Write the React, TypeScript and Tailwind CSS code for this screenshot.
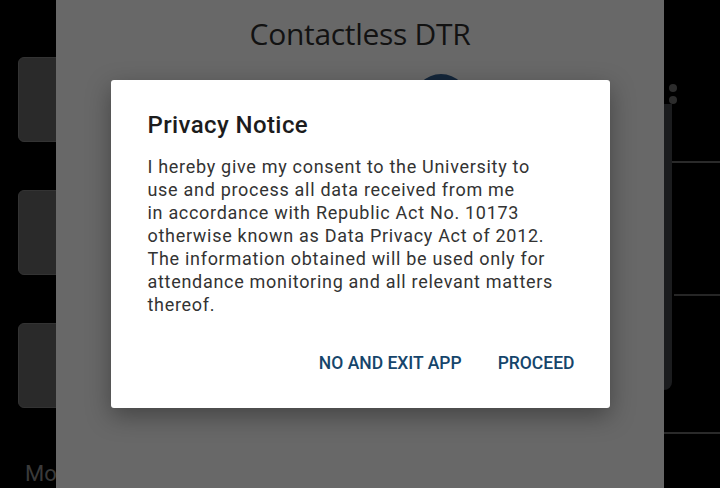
import React from 'react';

const bodyLines = [
  'I hereby give my consent to the University to',
  'use and process all data received from me',
  'in accordance with Republic Act No. 10173',
  'otherwise known as Data Privacy Act of 2012.',
  'The information obtained will be used only for',
  'attendance monitoring and all relevant matters',
  'thereof.',
];

function LeftPeek() {
  return (
    <div className="w-[56px] h-full bg-black overflow-hidden flex flex-col pt-[57px] pl-[18px]">
      {/* dimmed cards of the previous screen */}
      <div className="flex flex-col gap-[48px]">
        <div className="w-[50px] h-[85px] rounded-md bg-[#2a2a2a] border border-[#333]" />
        <div className="w-[50px] h-[85px] rounded-md bg-[#2a2a2a] border border-[#333]" />
        <div className="w-[50px] h-[85px] rounded-md bg-[#2a2a2a] border border-[#333]" />
      </div>
      <span className="mt-auto pl-[7px] text-[22px] leading-[28px] text-[#3a3a3a] font-['Roboto',sans-serif] whitespace-nowrap">
        Mo
      </span>
    </div>
  );
}

function RightPeek() {
  return (
    <div className="w-[56px] h-full bg-black overflow-hidden flex flex-col pt-[84px]">
      <div className="flex flex-col gap-[4px] pl-[5px]">
        <div className="w-[8px] h-[8px] rounded-full bg-[#2c2c2c]" />
        <div className="w-[8px] h-[8px] rounded-full bg-[#2c2c2c]" />
      </div>
      <div className="flex">
        <div className="w-[8px] h-[286px] rounded-br-lg bg-[#1b1c1e]" />
        <div className="flex-1 flex flex-col pt-[57px] gap-[131px]">
          <div className="h-[2px] bg-[#2a2a2a]" />
          <div className="h-[2px] bg-[#262626] ml-[2px]" />
        </div>
      </div>
      <div className="mt-[42px] h-[2px] bg-[#2a2a2a]" />
    </div>
  );
}

export default function App() {
  return (
    <div className="w-[720px] h-[488px] flex bg-black overflow-hidden">
      <LeftPeek />

      {/* App screen under a dim overlay */}
      <div className="relative flex-1 h-full bg-[#686868] flex flex-col">
        <h1 className="pt-[14px] text-center text-[30px] leading-[40px] text-[#121212] font-['Open_Sans',sans-serif] tracking-[-0.3px]">
          Contactless DTR
        </h1>
        <div className="mt-[20px] ml-[357px] w-[56px] h-[56px] rounded-full bg-[#14263a]" />

        {/* Privacy dialog */}
        <div className="absolute inset-0 flex items-center justify-center">
          <div className="w-[499px] h-[328px] bg-white rounded-[3px] shadow-[0_8px_24px_rgba(0,0,0,0.35)] pl-[37px] pr-[35px] pt-[31px] font-['Roboto',sans-serif]">
            <h2 className="text-[24px] leading-[28px] font-medium tracking-[0.4px] text-[#1c1c1c]">Privacy Notice</h2>
            <p className="mt-[16px] text-[18px] leading-[23px] tracking-[0.7px] text-[#333333]">
              {bodyLines.map((line) => (
                <span key={line} className="block whitespace-nowrap">{line}</span>
              ))}
            </p>
            <div className="mt-[37px] flex justify-end gap-[36px] text-[17.5px] leading-[20px] font-medium text-[#15456b]">
              <button className="cursor-pointer">NO AND EXIT APP</button>
              <button className="cursor-pointer">PROCEED</button>
            </div>
          </div>
        </div>
      </div>

      <RightPeek />
    </div>
  );
}
